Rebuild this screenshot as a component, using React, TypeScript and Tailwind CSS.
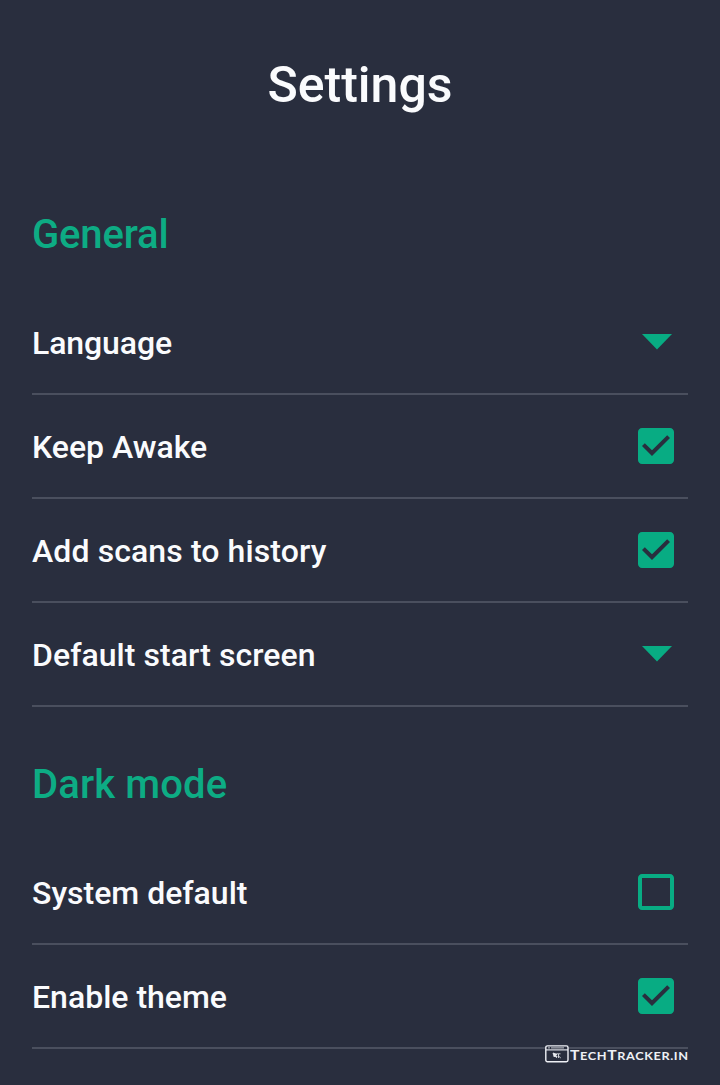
import type { ReactNode } from "react";

function Checkbox({ checked }: { checked: boolean }) {
  return (
    <span role="checkbox" aria-checked={checked} className="mr-3.5 size-9 shrink-0">
      <svg viewBox="3 3 18 18" className="size-9 fill-[#08ac83]">
        {checked ? (
          <path d="M19 3H5c-1.11 0-2 .9-2 2v14c0 1.1.89 2 2 2h14c1.11 0 2-.9 2-2V5c0-1.1-.89-2-2-2zm-9 14l-5-5 1.41-1.41L10 14.17l7.59-7.59L19 8l-9 9z" />
        ) : (
          <path d="M19 5v14H5V5h14m0-2H5c-1.1 0-2 .9-2 2v14c0 1.1.9 2 2 2h14c1.1 0 2-.9 2-2V5c0-1.1-.9-2-2-2z" />
        )}
      </svg>
    </span>
  );
}

function Arrow() {
  return (
    <svg viewBox="0 0 30 16" className="mr-4 h-4 w-[30px] shrink-0 fill-[#08ac83]">
      <path d="M0 0h30L15 15.5z" />
    </svg>
  );
}

function Row({ label, tracking = "", children }: { label: string; tracking?: string; children: ReactNode }) {
  return (
    <div className="flex h-26 items-center justify-between border-b-2 border-[#4a4f5e]">
      <span className={`pt-0.5 text-[32px] leading-10 font-medium ${tracking}`}>{label}</span>
      {children}
    </div>
  );
}

function Section({ title, tracking, children }: { title: string; tracking: string; children: ReactNode }) {
  return (
    <section>
      <h2 className={`h-[134px] pt-[54px] text-[40px] leading-12 font-medium text-[#0dac84] ${tracking}`}>{title}</h2>
      {children}
    </section>
  );
}

function Watermark() {
  return (
    <div className="absolute top-[1044px] left-[545px] flex h-5 items-center text-[#eef0f5]">
      <svg viewBox="0 0 24 18" className="h-[18px] w-6 shrink-0" fill="none" stroke="currentColor">
        <rect x="0.8" y="0.9" width="22.2" height="15.8" rx="1.6" fill="#292e3e" strokeWidth="1.4" />
        <path d="M1 4.9h22" strokeWidth="1.1" />
        <path d="M3 2.9h2M6 2.9h13" strokeWidth="0.8" />
        <path d="M8 8l4 1.3-1.4.7 1.6 2-.8.6-1.6-1.9-.6 1.3zM11.5 8.8h4M13.5 9v4M13.5 11l2.3 2" fill="currentColor" strokeWidth="0.8" />
      </svg>
      <span className="mt-0.5 ml-px flex origin-left scale-x-[1.21] items-baseline font-[Lato] text-[10.5px] leading-5 font-bold tracking-[0.5px]">
        <span className="text-[13px]">T</span>ECH<span className="text-[13px]">T</span>RACKER.IN
      </span>
    </div>
  );
}

export default function App() {
  return (
    <main className="relative h-[1085px] w-[720px] overflow-hidden bg-[#292e3e] px-8 font-[Roboto,sans-serif] text-[#fafbfd]">
      <header className="flex h-[157px] justify-center pt-[55px]">
        <h1 className="text-[50px] leading-[60px] font-medium">Settings</h1>
      </header>
      <Section title="General" tracking="tracking-[-0.15px]">
        <Row label="Language" tracking="tracking-[-0.1px]"><Arrow /></Row>
        <Row label="Keep Awake"><Checkbox checked /></Row>
        <Row label="Add scans to history" tracking="tracking-[0.1px]"><Checkbox checked /></Row>
        <Row label="Default start screen" tracking="tracking-[0.05px]"><Arrow /></Row>
      </Section>
      <Section title="Dark mode" tracking="tracking-[0.12px]">
        <Row label="System default"><Checkbox checked={false} /></Row>
        <Row label="Enable theme"><Checkbox checked /></Row>
      </Section>
      <Watermark />
    </main>
  );
}
